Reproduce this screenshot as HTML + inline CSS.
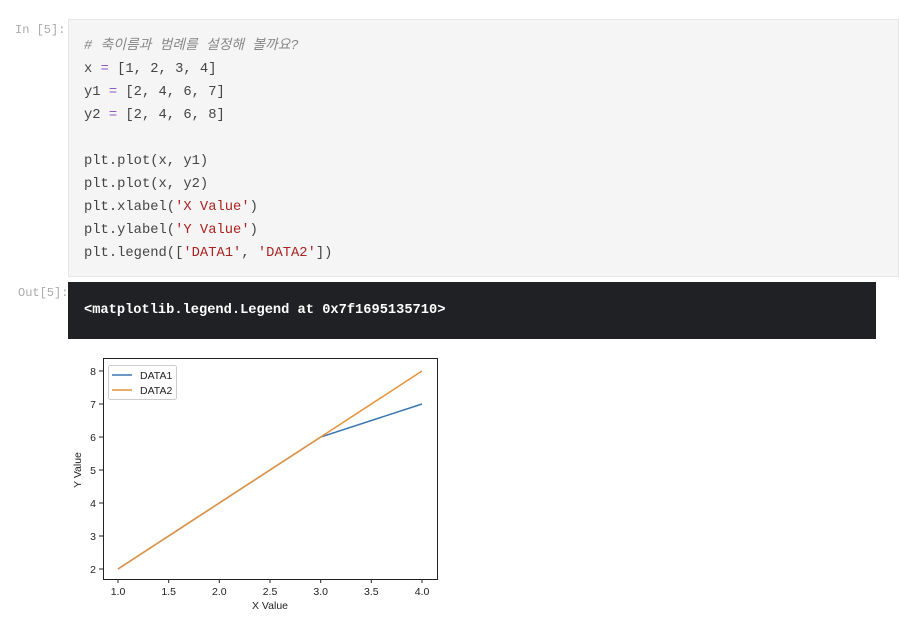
<!DOCTYPE html>
<html><head><meta charset="utf-8"><style>
body{margin:0;background:#fff;width:920px;height:618px;position:relative;font-family:"Liberation Mono","Noto Sans CJK KR",monospace;overflow:hidden}
.p{position:absolute;color:#aaa;font-size:12px}
.code{position:absolute;left:68px;top:19px;width:831px;height:258px;background:#f5f5f5;border:1px solid #e6e6e6;box-sizing:border-box}
.code pre{margin:0;position:absolute;left:15px;top:15px;font-family:"Liberation Mono","Noto Sans CJK KR",monospace;font-size:13.8px;line-height:23px;color:#444}
.c{color:#888;font-style:italic}.s{color:#a22}.o{color:#8a5cbf}
.out{position:absolute;left:68px;top:282px;width:808px;height:57px;background:#202124;color:#fff;font-size:13.7px;font-weight:bold;line-height:58px;padding-left:16px;box-sizing:border-box}
</style></head><body>
<div class="p" style="left:15px;top:23px">In [5]:</div>
<div class="code"><pre><span class="c"># 축이름과 범례를 설정해 볼까요?</span>
x <span class="o">=</span> [1, 2, 3, 4]
y1 <span class="o">=</span> [2, 4, 6, 7]
y2 <span class="o">=</span> [2, 4, 6, 8]

plt.plot(x, y1)
plt.plot(x, y2)
plt.xlabel(<span class="s">'X Value'</span>)
plt.ylabel(<span class="s">'Y Value'</span>)
plt.legend([<span class="s">'DATA1'</span>, <span class="s">'DATA2'</span>])</pre></div>
<div class="p" style="left:18px;top:286px">Out[5]:</div>
<div class="out">&lt;matplotlib.legend.Legend at 0x7f1695135710&gt;</div>
<svg style="position:absolute;left:0;top:0" width="920" height="618" font-family="Liberation Sans,sans-serif" font-size="10.5" fill="#222">
<rect x="103.5" y="358.5" width="334" height="221" fill="none" stroke="#222" stroke-width="1"/>
<g stroke="#222">
<line x1="118" y1="579" x2="118" y2="583"/><line x1="168.7" y1="579" x2="168.7" y2="583"/><line x1="219.3" y1="579" x2="219.3" y2="583"/><line x1="270" y1="579" x2="270" y2="583"/><line x1="320.7" y1="579" x2="320.7" y2="583"/><line x1="371.3" y1="579" x2="371.3" y2="583"/><line x1="422" y1="579" x2="422" y2="583"/>
<line x1="99" y1="569" x2="103" y2="569"/><line x1="99" y1="536" x2="103" y2="536"/><line x1="99" y1="503" x2="103" y2="503"/><line x1="99" y1="470" x2="103" y2="470"/><line x1="99" y1="437" x2="103" y2="437"/><line x1="99" y1="404" x2="103" y2="404"/><line x1="99" y1="371" x2="103" y2="371"/>
</g>
<g text-anchor="middle"><text x="118" y="595">1.0</text><text x="168.7" y="595">1.5</text><text x="219.3" y="595">2.0</text><text x="270" y="595">2.5</text><text x="320.7" y="595">3.0</text><text x="371.3" y="595">3.5</text><text x="422" y="595">4.0</text>
<text x="270" y="609">X Value</text></g>
<g text-anchor="end"><text x="96" y="573">2</text><text x="96" y="540">3</text><text x="96" y="507">4</text><text x="96" y="474">5</text><text x="96" y="441">6</text><text x="96" y="408">7</text><text x="96" y="375">8</text></g>
<text transform="translate(81,470) rotate(-90)" text-anchor="middle">Y Value</text>
<polyline points="118,569 219.3,503 320.7,437 422,404" fill="none" stroke="#3a75b0" stroke-width="1.5"/>
<polyline points="118,569 219.3,503 320.7,437 422,371" fill="none" stroke="#e6923a" stroke-width="1.5"/>
<rect x="108.5" y="365.5" width="68" height="34" rx="2" fill="#fff" stroke="#ccc"/>
<line x1="112" y1="375" x2="132" y2="375" stroke="#3a75b0" stroke-width="1.5"/>
<line x1="112" y1="390" x2="132" y2="390" stroke="#e6923a" stroke-width="1.5"/>
<text x="140" y="379">DATA1</text><text x="140" y="394">DATA2</text>
</svg>
</body></html>
